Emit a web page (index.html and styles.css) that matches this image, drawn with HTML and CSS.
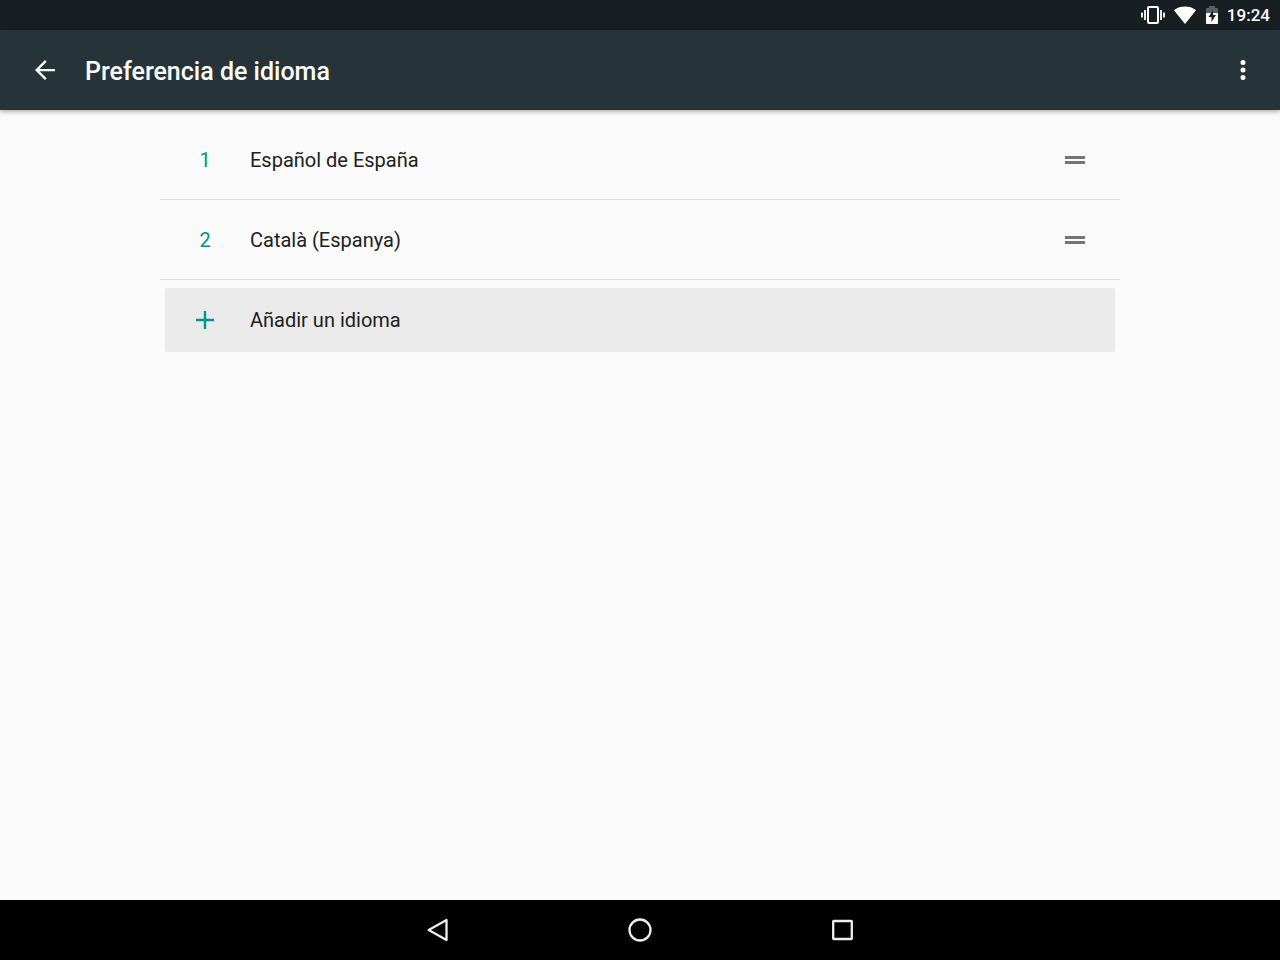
FILE: index.html
```
<!DOCTYPE html>
<html lang="es">

<head>
    <meta charset="UTF-8">
    <meta name="viewport" content="width=device-width, initial-scale=1.0">
    <title>Preferencia de idioma</title>
    <link rel="stylesheet" href="styles.css">
</head>

<body>

    <div class="status-bar">
        <svg class="vibrate" width="24" height="20" viewBox="0 0 24 20" aria-hidden="true">
            <rect x="7" y="2" width="10" height="16" rx="1" fill="none" stroke="#fff" stroke-width="2" />
            <path d="M4 5v10M20 5v10M1 7.500v5M23 7.500v5" stroke="#fff" stroke-width="1.800" />
        </svg>
        <svg class="wifi" width="24" height="20" viewBox="0 0 24 20" aria-hidden="true">
            <path d="M12 19L1 5.300C1.400 5 5.200 1.500 12 1.500s10.600 3.500 11 3.800z" fill="#fff" />
        </svg>
        <svg class="battery" width="14" height="20" viewBox="0 0 14 20" aria-hidden="true">
            <path d="M4 1h6v2h2q1 0 1 1v4H1V4q0-1 1-1h2z" fill="#5b6265" />
            <path d="M1 8h12v10q0 1-1 1H2q-1 0-1-1z" fill="#fff" />
            <path d="M8 5L3.500 12H6.500v5L11 10H8z" fill="#171f22" />
        </svg>
        <time class="clock">19:24</time>
    </div>

    <header class="app-bar">
        <button class="icon-button" aria-label="Atrás">
            <svg width="30" height="30" viewBox="0 0 24 24">
                <path d="M20 11.100H7.600l5.700-5.700L12 4l-8 8 8 8 1.300-1.400L7.600 12.900H20z" fill="#fff" />
            </svg>
        </button>
        <h1 class="title">Preferencia de idioma</h1>
        <button class="icon-button more" aria-label="Más opciones">
            <svg width="30" height="30" viewBox="0 0 24 24">
                <path d="M12 8a2 2 0 1 0 0-4 2 2 0 0 0 0 4zm0 2a2 2 0 1 0 0 4 2 2 0 0 0 0-4zm0 6a2 2 0 1 0 0 4 2 2 0 0 0 0-4z" fill="#fff" />
            </svg>
        </button>
    </header>

    <main class="content">
        <ol class="languages">
            <li class="row">
                <span class="number">1</span>
                <span class="label">Español de España</span>
                <button class="handle" aria-label="Mover Español de España">
                    <svg width="20" height="8" viewBox="0 0 20 8">
                        <path d="M0 0h20v3H0zM0 5h20v3H0z" fill="#757575" />
                    </svg>
                </button>
            </li>
            <li class="row">
                <span class="number">2</span>
                <span class="label">Català (Espanya)</span>
                <button class="handle" aria-label="Mover Català (Espanya)">
                    <svg width="20" height="8" viewBox="0 0 20 8">
                        <path d="M0 0h20v3H0zM0 5h20v3H0z" fill="#757575" />
                    </svg>
                </button>
            </li>
        </ol>
        <button class="add">
            <svg class="plus" width="18" height="18" viewBox="0 0 18 18" aria-hidden="true">
                <path d="M9 0v18M0 9h18" stroke="#009688" stroke-width="2.400" />
            </svg>
            <span class="label">Añadir un idioma</span>
        </button>
    </main>

    <nav class="nav-bar">
        <button class="nav-button" aria-label="Volver">
            <svg width="24" height="24" viewBox="0 0 24 24">
                <path d="M20.500 2v20L2.700 12z" fill="none" stroke="#eee" stroke-width="2.300" stroke-linejoin="round" />
            </svg>
        </button>
        <button class="nav-button" aria-label="Inicio">
            <svg width="24" height="24" viewBox="0 0 24 24">
                <circle cx="12" cy="12" r="10.500" fill="none" stroke="#eee" stroke-width="2.300" />
            </svg>
        </button>
        <button class="nav-button" aria-label="Aplicaciones recientes">
            <svg width="24" height="24" viewBox="0 0 24 24">
                <rect x="3.200" y="3" width="18.600" height="18" rx=".5" fill="none" stroke="#eee" stroke-width="2.300" />
            </svg>
        </button>
    </nav>

</body>

</html>
```
FILE: styles.css
```
:root {
    --bar: #263338;
    --status: #171f22;
    --page: #fafafa;
    --accent: #009688;
    --text: #212121;
}

body {
    margin: 0;
    min-height: 100vh;
    display: flex;
    flex-direction: column;
    background: var(--page);
    color: var(--text);
    font-family: Roboto, "Liberation Sans", sans-serif;
    font-size: 20px;
}

button {
    padding: 0;
    border: 0;
    background: none;
    color: inherit;
    font: inherit;
    cursor: pointer;
}

svg {
    display: block;
}

.status-bar {
    display: flex;
    align-items: center;
    justify-content: flex-end;
    gap: 8px;
    height: 30px;
    padding: 0 10px;
    background: var(--status);
    color: #ffffff;
}

.clock {
    font-size: 17px;
    font-weight: 500;
}

.app-bar {
    display: flex;
    align-items: center;
    height: 80px;
    padding: 0 22px 0 30px;
    background: var(--bar);
    color: #ffffff;
    box-shadow: 0 1px 5px rgba(0, 0, 0, 0.4);
}

.title {
    flex: 1;
    margin: 0 0 0 25px;
    padding-top: 4px;
    font-size: 25px;
    font-weight: 500;
    line-height: 30px;
}

.content {
    flex: 1;
    width: 75%;
    margin: 0 auto;
    padding-top: 10px;
}

.languages {
    margin: 0;
    padding: 0;
    list-style: none;
}

.row,
.add {
    display: grid;
    grid-template-columns: 80px 1fr 80px;
    column-gap: 5px;
    align-items: center;
    justify-items: center;
}

.row {
    box-sizing: border-box;
    height: 80px;
    padding: 0 5px;
    border-bottom: 1px solid #d9d9d9;
}

.number {
    color: var(--accent);
}

.label {
    justify-self: start;
}

.handle {
    padding: 16px;
    cursor: grab;
}

.add {
    width: calc(100% - 10px);
    height: 64px;
    margin: 8px 5px;
    border-radius: 2px;
    background: #eaeaea;
}

.nav-bar {
    display: flex;
    justify-content: center;
    height: 60px;
    background: #000000;
}

.nav-button {
    display: flex;
    align-items: center;
    justify-content: center;
    width: 202px;
}
```
